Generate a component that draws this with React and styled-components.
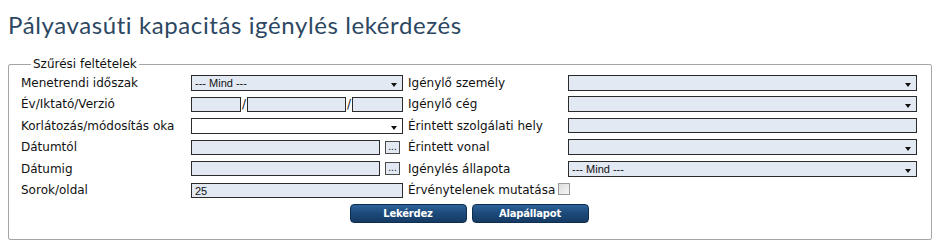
import React from "react";
import styled, { createGlobalStyle } from "styled-components";

const GlobalStyle = createGlobalStyle`
  html, body { margin: 0; padding: 0; background: #ffffff; }
  body { font-family: "DejaVu Sans", Verdana, sans-serif; }
`;

const Page = styled.div`
  padding: 10px 5px 0 8px;
`;

const Title = styled.h1`
  margin: 0;
  font-family: Lato, "Open Sans", sans-serif;
  font-weight: 400;
  font-size: 24px;
  letter-spacing: 0.6px;
  line-height: 30px;
  color: #2c4762;
`;

const Fieldset = styled.fieldset`
  margin: 17px 0 0 0;
  padding: 1px 14px 16px 12px;
  border: 1px solid #a6a6a6;
  border-radius: 2px;
  min-width: 0;
`;

const Legend = styled.legend`
  padding: 0 2px;
  margin-left: 10px;
  font-size: 12px;
  color: #111;
`;

const Grid = styled.div`
  display: grid;
  grid-template-columns: 170px 212px 165px 349px;
  grid-auto-rows: 21.5px;
  align-items: center;
`;

const Label = styled.div`
  font-size: 12px;
  color: #111;
  white-space: nowrap;
  padding-left: ${(p) => (p.$right ? "5px" : "0")};
`;

const Field = styled.div`
  display: flex;
  align-items: center;
`;

const Box = styled.div`
  position: relative;
  box-sizing: border-box;
  width: ${(p) => p.$w || "100%"};
  height: ${(p) => p.$h || "16px"};
  border: 1px solid #2b2b2b;
  background: ${(p) => (p.$white ? "#ffffff" : "#e3e9f3")};
  font-family: "Liberation Sans", Arial, sans-serif;
  font-size: 11px;
  line-height: 14px;
  padding-left: 3px;
  color: #111;
  flex-shrink: 0;
`;

const Arrow = styled.span`
  position: absolute;
  right: 5px;
  top: 7px;
  width: 0;
  height: 0;
  border-left: 3.5px solid transparent;
  border-right: 3.5px solid transparent;
  border-top: 4px solid #111;
`;

const Slash = styled.span`
  font-size: 12px;
  width: 6px;
  text-align: center;
  color: #111;
`;

const Picker = styled.div`
  box-sizing: border-box;
  margin-left: 5px;
  width: 15px;
  height: 13px;
  border: 1px solid #4a4a4a;
  background: #e3e9f3;
  font-family: "Liberation Sans", Arial, sans-serif;
  font-size: 10px;
  line-height: 9px;
  text-align: center;
  color: #111;
`;

const Check = styled.span`
  box-sizing: border-box;
  display: inline-block;
  width: 12px;
  height: 12px;
  margin-left: 3px;
  border: 1px solid #9a9a9a;
  background: linear-gradient(135deg, #dcdcdc, #f6f6f6);
  vertical-align: -1px;
`;

const Buttons = styled.div`
  display: flex;
  justify-content: center;
  gap: 5px;
  margin-top: 3px;
`;

const Button = styled.button`
  width: 117px;
  height: 19px;
  padding: 0;
  border: 1px solid #0f2d4f;
  border-radius: 4px;
  background: linear-gradient(#2f6399 0%, #1d4b7c 45%, #153a63 100%);
  color: #ffffff;
  font-family: "DejaVu Sans", Verdana, sans-serif;
  font-weight: bold;
  font-size: 10px;
  letter-spacing: -0.2px;
`;

const Select = ({ value, white }) => (
  <Box $white={white}>
    {value}
    <Arrow />
  </Box>
);

export default function App() {
  return (
    <Page>
      <GlobalStyle />
      <Title>Pályavasúti kapacitás igénylés lekérdezés</Title>
      <Fieldset>
        <Legend>Szűrési feltételek</Legend>
        <Grid>
          <Label>Menetrendi időszak</Label>
          <Field><Select value="--- Mind ---" /></Field>
          <Label $right>Igénylő személy</Label>
          <Field><Select /></Field>

          <Label>Év/Iktató/Verzió</Label>
          <Field>
            <Box $w="50px" $h="15px" />
            <Slash>/</Slash>
            <Box $w="99px" $h="15px" />
            <Slash>/</Slash>
            <Box $w="51px" $h="15px" />
          </Field>
          <Label $right>Igénylő cég</Label>
          <Field><Select /></Field>

          <Label>Korlátozás/módosítás oka</Label>
          <Field><Select white /></Field>
          <Label $right>Érintett szolgálati hely</Label>
          <Field><Box $h="15px" /></Field>

          <Label>Dátumtól</Label>
          <Field>
            <Box $w="189px" $h="15px" />
            <Picker>...</Picker>
          </Field>
          <Label $right>Érintett vonal</Label>
          <Field><Select /></Field>

          <Label>Dátumig</Label>
          <Field>
            <Box $w="189px" $h="15px" />
            <Picker>...</Picker>
          </Field>
          <Label $right>Igénylés állapota</Label>
          <Field><Select value="--- Mind ---" /></Field>

          <Label>Sorok/oldal</Label>
          <Field><Box $h="15px">25</Box></Field>
          <Label $right>
            Érvénytelenek mutatása<Check />
          </Label>
          <Field />
        </Grid>
        <Buttons>
          <Button>Lekérdez</Button>
          <Button>Alapállapot</Button>
        </Buttons>
      </Fieldset>
    </Page>
  );
}
